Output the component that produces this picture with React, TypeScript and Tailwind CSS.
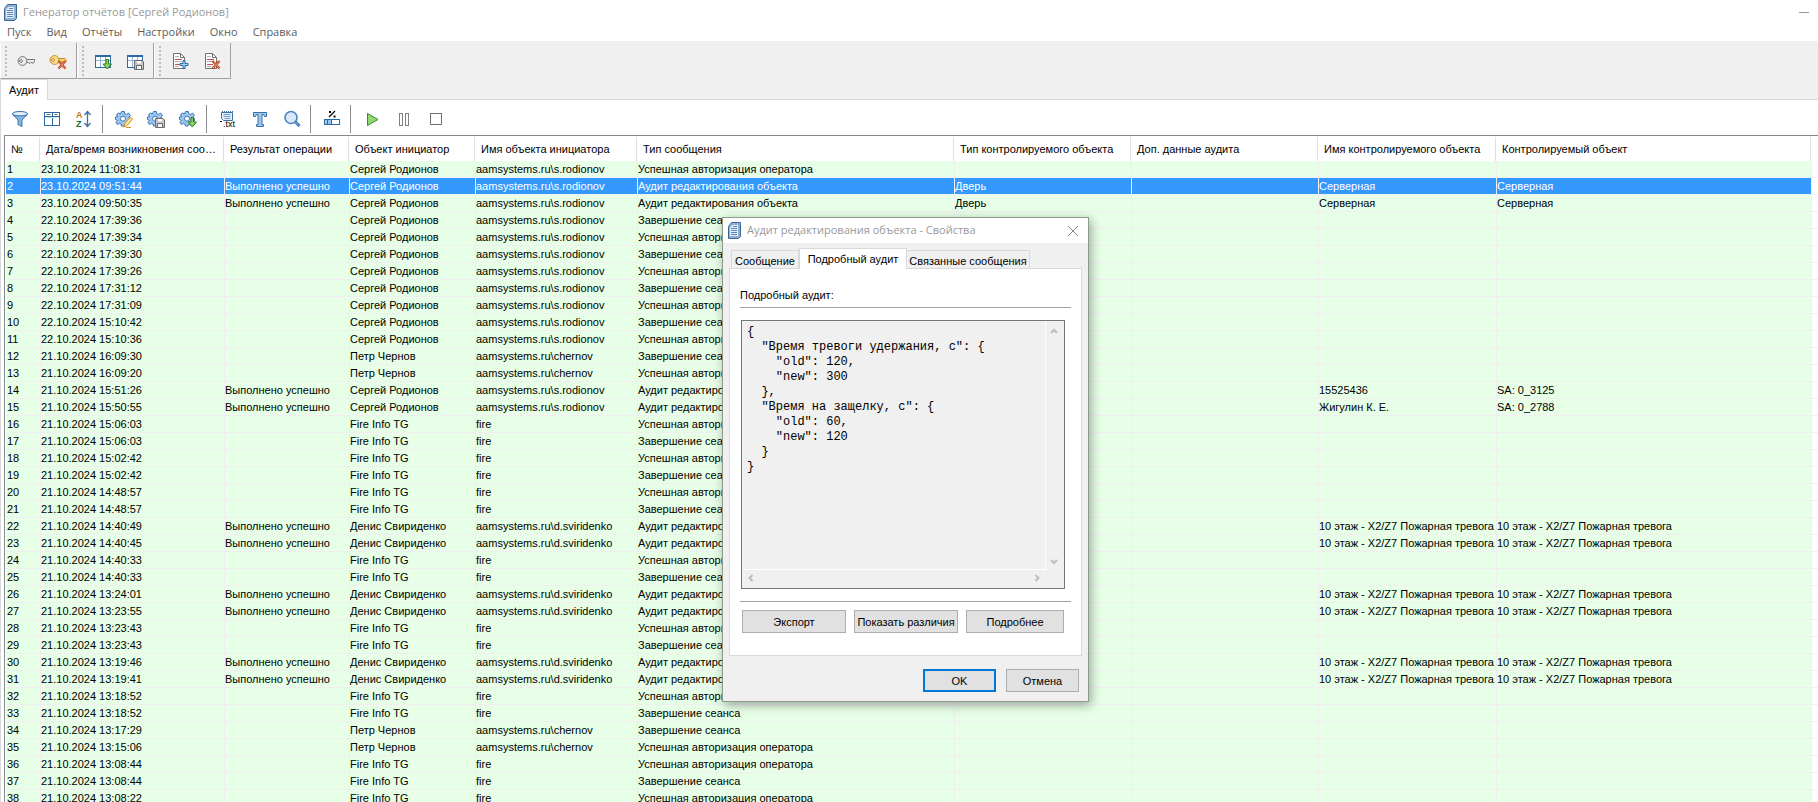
import React, { useState } from 'react';

type Row = {
  time: string;
  result?: string;
  who: string;
  login: string;
  type: string;
  objType?: string;
  objName?: string;
  obj?: string;
};

const LOGIN_OK = 'Успешная авторизация оператора';
const LOGOUT = 'Завершение сеанса';
const EDIT = 'Аудит редактирования объекта';
const DONE = 'Выполнено успешно';
const FIRE_ZONE = '10 этаж - X2/Z7 Пожарная тревога';

const rodionov = { who: 'Сергей Родионов', login: 'aamsystems.ru\\s.rodionov' };
const chernov = { who: 'Петр Чернов', login: 'aamsystems.ru\\chernov' };
const sviridenko = { who: 'Денис Свириденко', login: 'aamsystems.ru\\d.sviridenko' };
const fire = { who: 'Fire Info TG', login: 'fire' };
const door = { result: DONE, type: EDIT, objType: 'Дверь', objName: 'Серверная', obj: 'Серверная' };
const zone = { result: DONE, type: EDIT, objName: FIRE_ZONE, obj: FIRE_ZONE };

const ROWS: Row[] = [
  { time: '23.10.2024 11:08:31', ...rodionov, type: LOGIN_OK },
  { time: '23.10.2024 09:51:44', ...rodionov, ...door },
  { time: '23.10.2024 09:50:35', ...rodionov, ...door },
  { time: '22.10.2024 17:39:36', ...rodionov, type: LOGOUT },
  { time: '22.10.2024 17:39:34', ...rodionov, type: LOGIN_OK },
  { time: '22.10.2024 17:39:30', ...rodionov, type: LOGOUT },
  { time: '22.10.2024 17:39:26', ...rodionov, type: LOGIN_OK },
  { time: '22.10.2024 17:31:12', ...rodionov, type: LOGOUT },
  { time: '22.10.2024 17:31:09', ...rodionov, type: LOGIN_OK },
  { time: '22.10.2024 15:10:42', ...rodionov, type: LOGOUT },
  { time: '22.10.2024 15:10:36', ...rodionov, type: LOGIN_OK },
  { time: '21.10.2024 16:09:30', ...chernov, type: LOGOUT },
  { time: '21.10.2024 16:09:20', ...chernov, type: LOGIN_OK },
  { time: '21.10.2024 15:51:26', ...rodionov, result: DONE, type: EDIT, objName: '15525436', obj: 'SA: 0_3125' },
  { time: '21.10.2024 15:50:55', ...rodionov, result: DONE, type: EDIT, objName: 'Жигулин К. Е.', obj: 'SA: 0_2788' },
  { time: '21.10.2024 15:06:03', ...fire, type: LOGIN_OK },
  { time: '21.10.2024 15:06:03', ...fire, type: LOGOUT },
  { time: '21.10.2024 15:02:42', ...fire, type: LOGIN_OK },
  { time: '21.10.2024 15:02:42', ...fire, type: LOGOUT },
  { time: '21.10.2024 14:48:57', ...fire, type: LOGIN_OK },
  { time: '21.10.2024 14:48:57', ...fire, type: LOGOUT },
  { time: '21.10.2024 14:40:49', ...sviridenko, ...zone },
  { time: '21.10.2024 14:40:45', ...sviridenko, ...zone },
  { time: '21.10.2024 14:40:33', ...fire, type: LOGIN_OK },
  { time: '21.10.2024 14:40:33', ...fire, type: LOGOUT },
  { time: '21.10.2024 13:24:01', ...sviridenko, ...zone },
  { time: '21.10.2024 13:23:55', ...sviridenko, ...zone },
  { time: '21.10.2024 13:23:43', ...fire, type: LOGIN_OK },
  { time: '21.10.2024 13:23:43', ...fire, type: LOGOUT },
  { time: '21.10.2024 13:19:46', ...sviridenko, ...zone },
  { time: '21.10.2024 13:19:41', ...sviridenko, ...zone },
  { time: '21.10.2024 13:18:52', ...fire, type: LOGIN_OK },
  { time: '21.10.2024 13:18:52', ...fire, type: LOGOUT },
  { time: '21.10.2024 13:17:29', ...chernov, type: LOGOUT },
  { time: '21.10.2024 13:15:06', ...chernov, type: LOGIN_OK },
  { time: '21.10.2024 13:08:44', ...fire, type: LOGIN_OK },
  { time: '21.10.2024 13:08:44', ...fire, type: LOGOUT },
  { time: '21.10.2024 13:08:22', ...fire, type: LOGIN_OK },
];

const COLUMNS = [
  { title: '№', width: 'w-[35px]' },
  { title: 'Дата/время возникновения сообщения', width: 'w-[184px]' },
  { title: 'Результат операции', width: 'w-[125px]' },
  { title: 'Объект инициатор', width: 'w-[126px]' },
  { title: 'Имя объекта инициатора', width: 'w-[162px]' },
  { title: 'Тип сообщения', width: 'w-[317px]' },
  { title: 'Тип контролируемого объекта', width: 'w-[177px]' },
  { title: 'Доп. данные аудита', width: 'w-[187px]' },
  { title: 'Имя контролируемого объекта', width: 'w-[178px]' },
  { title: 'Контролируемый объект', width: 'w-[315px]' },
];

const MENU = ['Пуск', 'Вид', 'Отчёты', 'Настройки', 'Окно', 'Справка'];

const AUDIT_JSON = `{
  "Время тревоги удержания, с": {
    "old": 120,
    "new": 300
  },
  "Время на защелку, с": {
    "old": 60,
    "new": 120
  }
}`;

/* ---------- icons ---------- */

function Icon({ children }: { children: React.ReactNode }) {
  return (
    <svg viewBox="0 0 20 20" width="20" height="20" fill="none" aria-hidden="true">
      {children}
    </svg>
  );
}

function AppIcon() {
  return (
    <svg viewBox="0 0 13 17" width="13" height="17" fill="none" aria-hidden="true">
      <path d="M.5 4.5 L3.5 .5 H12.5 V14.5 L10.5 16.5 H.5 Z" fill="#8fb0d0" stroke="#3b6594" strokeLinejoin="round" />
      <path d="M2 6 L4.5 3 H10 V14 H2 Z" fill="#e6eff9" />
      <path d="M5 4.5 H9 M3 6.5 H9 M3 8.5 H9 M3 10.5 H9 M3 12.5 H9" stroke="#5c86b3" />
    </svg>
  );
}

const GreenArrow = () => (
  <path d="M13 8.5 H15.5 V13 H18.5 L14.25 18 L10 13 H13 Z" fill="#8ad463" stroke="#2e7d1e" strokeLinejoin="round" />
);

const Disk = () => (
  <>
    <path d="M9.5 9.5 H17 L18.5 11 V18.5 H9.5 Z" fill="#c4c4c4" stroke="#6a6a6a" />
    <path d="M12 10 H16 V12.5 H12 Z" fill="#fff" />
    <path d="M11.5 14.5 H16.5 V18.5 H11.5 Z" fill="#f4f4f4" stroke="#6a6a6a" />
  </>
);

const RedCross = () => (
  <>
    <path d="M10.5 10 L17.5 17.5 M17.5 10 L10.5 17.5" stroke="#b8431c" strokeWidth="2.4" />
    <path d="M11 10.5 L17 17 M17 10.5 L11 17" stroke="#f0946a" strokeWidth="1" />
  </>
);

const Grid = () => (
  <>
    <rect x="2.5" y="4.5" width="15" height="12" fill="#fff" stroke="#2b6aa6" />
    <path d="M3 5.5 H17" stroke="#2b6aa6" />
    <path d="M3 9.5 H17 M7.5 6 V16 M12.5 6 V16" stroke="#8db6dd" />
  </>
);

const Sheet = () => (
  <>
    <path d="M3.5 2.5 H10.5 L14.5 6.5 V17.5 H3.5 Z" fill="#fff" stroke="#707070" />
    <path d="M10.5 2.5 V6.5 H14.5" stroke="#707070" />
    <path d="M5 5.5 H9 M5 10.5 H12 M5 15.5 H9" stroke="#b0b0b0" />
    <path d="M5 8.5 H12 M5 13.5 H11" stroke="#cf4a58" />
  </>
);

const Gear = () => (
  <>
    <path
      d="M7.5 2.5 H10.5 V4.5 L12.5 5.5 L14.5 4 L16.5 6.5 L15 8 V9 L16.5 9.5 V12 L14.5 12.5 L14.5 14.5 L12.5 16 L11 15 L10 17 H7.5 L7 15 L5.5 14.5 L3.5 15.5 L2 13.5 L3.5 11.5 L1.5 10.5 V8 L3.5 7.5 L2.5 5.5 L4.5 4 L6.5 5 Z"
      fill="#9cc6ef"
      stroke="#3f78b0"
      strokeLinejoin="round"
    />
    <circle cx="9" cy="9.7" r="2.5" fill="#fff" stroke="#3f78b0" />
  </>
);

const KeyIcon = () => (
  <Icon>
    <path d="M11 8.5 H18.5 V10.5 L17.5 12 H16 L15.5 11 L14 12.5 L12.5 11.5 H10.5" fill="#ececec" stroke="#757575" />
    <circle cx="6.5" cy="10" r="4.4" fill="#ececec" stroke="#757575" />
    <circle cx="5" cy="10" r="1.4" fill="#fff" stroke="#757575" />
  </Icon>
);

const KeyDeleteIcon = () => (
  <Icon>
    <path d="M10 7.5 H17 L18.5 9.5 L17.5 11 H11" fill="#f7d774" stroke="#c08a20" />
    <circle cx="6.5" cy="9" r="4.4" fill="#fbe08c" stroke="#c08a20" />
    <circle cx="5" cy="9" r="1.4" fill="#fff" stroke="#c08a20" />
    <RedCross />
  </Icon>
);

const GridLoadIcon = () => <Icon><Grid /><GreenArrow /></Icon>;
const GridSaveIcon = () => <Icon><Grid /><Disk /></Icon>;

const ReportAddIcon = () => (
  <Icon>
    <Sheet />
    <path d="M13 9.5 H15 V12.5 H18 V14.5 H15 V17.5 H13 V14.5 H10 V12.5 H13 Z" fill="#a9d2f7" stroke="#2b6aa6" />
  </Icon>
);

const ReportDeleteIcon = () => <Icon><Sheet /><RedCross /></Icon>;

const FilterIcon = () => (
  <Icon>
    <path d="M2.5 4.5 C2.5 7.5 8 9 8 11.5 V15.5 L12 17.5 V11.5 C12 9 17.5 7.5 17.5 4.5" fill="#86b6e6" stroke="#3870a8" />
    <ellipse cx="10" cy="4.7" rx="7.5" ry="2.2" fill="#e4f0fb" stroke="#3870a8" />
  </Icon>
);

const ColumnsIcon = () => (
  <Icon>
    <rect x="2.5" y="3.5" width="15" height="13" fill="#fff" stroke="#2b6aa6" />
    <path d="M3 7.5 H17 M10.5 4 V16" stroke="#2b6aa6" />
    <path d="M4.5 5.5 H8.5 M12.5 5.5 H15.5" stroke="#777" />
    <path d="M3 8.5 H17" stroke="#cfe2f5" />
  </Icon>
);

const SortIcon = () => (
  <Icon>
    <text x="2" y="9" fontFamily="Liberation Sans" fontSize="9" fontWeight="700" fill="#c17a13">A</text>
    <text x="2" y="18" fontFamily="Liberation Sans" fontSize="9" fontWeight="700" fill="#12703a">Z</text>
    <path d="M13.5 3 V17 M10.5 6 L13.5 2.5 L16.5 6 M10.5 14 L13.5 17.5 L16.5 14" stroke="#3870a8" strokeWidth="1.3" />
  </Icon>
);

const GearEditIcon = () => (
  <Icon>
    <Gear />
    <path d="M9.5 18 L11 14 L16.5 8 L18.5 10 L13 16.5 Z" fill="#fbe3a6" stroke="#d18d1c" />
    <path d="M12 18.5 H17" stroke="#d18d1c" />
  </Icon>
);

const GearSaveIcon = () => <Icon><Gear /><Disk /></Icon>;
const GearLoadIcon = () => <Icon><Gear /><GreenArrow /></Icon>;

const TxtIcon = () => (
  <Icon>
    <path d="M3.5 3.5 H14.5 V11.5 H5.5 L3.5 9.5 Z" fill="#e8f1fb" stroke="#3870a8" />
    <path d="M4 2.5 H15" stroke="#3870a8" strokeDasharray="1 1" />
    <path d="M5.5 5.5 H12.5 M5.5 7.5 H12.5 M6.5 9.5 H12.5" stroke="#6c9fd0" />
    <path d="M2 12.5 H4" stroke="#000" />
    <text x="5" y="18" fontFamily="Liberation Sans" fontSize="9" fill="#000">.txt</text>
  </Icon>
);

const TextIcon = () => (
  <Icon>
    <path d="M3.5 3.5 H16.5 V7.5 H14.5 L13.5 5.5 H12 V15.5 H13.5 V17.5 H6.5 V15.5 H8 V5.5 H6.5 L5.5 7.5 H3.5 Z" fill="#9cc6f0" stroke="#3870a8" />
  </Icon>
);

const SearchIcon = () => (
  <Icon>
    <path d="M13 12.5 L17.5 17" stroke="#3870a8" strokeWidth="3" />
    <circle cx="9" cy="8.5" r="6" fill="#d9e9f8" stroke="#4a84bd" strokeWidth="1.6" />
    <path d="M13.5 13 L17 16.5" stroke="#86b6e6" />
  </Icon>
);

const ProgressIcon = () => (
  <Icon>
    <path d="M7 8 L13 2" stroke="#000" strokeWidth="1.2" />
    <path d="M7 3 H9 M11.5 7.5 H13.5" stroke="#000" strokeWidth="2" />
    <rect x="2.5" y="10.5" width="15" height="5" fill="#fff" stroke="#2b6aa6" />
    <path d="M3 11 H9 V15 H3 Z" fill="#9cc6f0" />
    <path d="M5.5 11 V15 M9.5 11 V15" stroke="#2b6aa6" />
  </Icon>
);

const PlayIcon = () => (
  <Icon>
    <path d="M5.5 4.5 L16 10.5 L5.5 16.5 Z" fill="#90d873" stroke="#3a8a2c" />
  </Icon>
);

const PauseIcon = () => (
  <Icon>
    <rect x="5.5" y="4.5" width="3" height="12" fill="#fff" stroke="#808080" />
    <rect x="11.5" y="4.5" width="3" height="12" fill="#fff" stroke="#808080" />
  </Icon>
);

const StopIcon = () => (
  <Icon>
    <rect x="4.5" y="4.5" width="11" height="11" fill="#fff" stroke="#707070" />
  </Icon>
);

function ToolButton({ label, children }: { label: string; children: React.ReactNode }) {
  return (
    <button type="button" aria-label={label} className="w-8 h-7 flex items-center justify-center">
      {children}
    </button>
  );
}

/* Docked toolbar with a dotted grip on its left side */
function Band({ children }: { children: React.ReactNode }) {
  return (
    <div className="w-[77px] h-9 flex items-center border-r border-b border-[#a0a0a0] border-l border-l-white">
      <span className="w-[9px] flex flex-col items-center gap-[2px]">
        {[0, 1, 2, 3, 4, 5, 6, 7].map((i) => (
          <span key={i} className="w-[2px] h-[2px] bg-[#bdbdbd]" />
        ))}
      </span>
      {children}
    </div>
  );
}

const Separator = () => <span className="w-px h-7 bg-[#8c8c8c] ml-[2px] mr-[5px]" />;

function AuditTable() {
  const [selected, setSelected] = useState(1);

  return (
    <table className="w-full table-fixed border-separate border-spacing-0 text-[11px] leading-4">
      <colgroup>
        {COLUMNS.map((c) => <col key={c.title} className={c.width} />)}
        <col />
      </colgroup>
      <thead>
        <tr>
          {COLUMNS.map((c) => (
            <th key={c.title} scope="col" className="p-0 pr-px font-normal text-left">
              <div className="h-6 leading-6 px-[5px] truncate border-r border-[#e0e0e0]">{c.title}</div>
            </th>
          ))}
          <td />
        </tr>
      </thead>
      <tbody>
        {ROWS.map((r, i) => {
          const cells = [i + 1, r.time, r.result, r.who, r.login, r.type, r.objType, '', r.objName, r.obj];
          const color = i === selected ? 'bg-[#3399ff] text-white' : 'bg-[#e6ffe6]';
          return (
            <tr key={i} onClick={() => setSelected(i)} className="h-[17px]">
              {cells.map((cell, n) => (
                <td
                  key={n}
                  className={`p-0 first:pl-px border-r border-b border-[#f0eef0] whitespace-nowrap overflow-hidden ${color}`}
                >
                  {cell}
                </td>
              ))}
              <td className="p-0 border-b border-[#f0eef0]" />
            </tr>
          );
        })}
      </tbody>
    </table>
  );
}

function Arrow({ d, label }: { d: string; label: string }) {
  return (
    <button type="button" aria-label={label} className="w-4 h-4 flex items-center justify-center">
      <svg viewBox="0 0 10 10" width="10" height="10" fill="none" stroke="#bdbdbd" strokeWidth="2">
        <path d={d} />
      </svg>
    </button>
  );
}

const BTN = 'h-[23px] border border-[#adadad] bg-[#e1e1e1] text-center whitespace-nowrap leading-[23px]';

function PropertiesDialog() {
  return (
    <div
      role="dialog"
      aria-labelledby="dlg-title"
      className="absolute left-[722px] top-[217px] w-[367px] bg-[#f0f0f0] border border-[#8f9a8f] shadow-[2px_3px_10px_rgba(0,0,0,0.35)] text-[11px]"
    >
      <div className="h-[25px] bg-white flex items-center pl-[5px] pr-[9px]">
        <AppIcon />
        <h2 id="dlg-title" className="ml-[6px] flex-1 font-['Open_Sans',sans-serif] text-[11px] text-[#999]">
          Аудит редактирования объекта - Свойства
        </h2>
        <button type="button" aria-label="Закрыть">
          <svg viewBox="0 0 12 12" width="12" height="12" stroke="#8a8a8a">
            <path d="M1 1 L11 11 M11 1 L1 11" />
          </svg>
        </button>
      </div>

      <div className="px-[6px] pt-[5px] pb-[9px]">
        <div role="tablist" className="flex items-end pl-[2px] h-[21px]">
          <button type="button" role="tab" className="w-[68px] h-[18px] mb-px border border-b-0 border-[#d9d9d9] leading-5">
            Сообщение
          </button>
          <button
            type="button"
            role="tab"
            aria-selected="true"
            className="w-[108px] h-[21px] z-10 bg-white border border-b-0 border-[#d9d9d9] leading-5"
          >
            Подробный аудит
          </button>
          <button type="button" role="tab" className="w-[123px] h-[18px] mb-px border border-b-0 border-l-0 border-[#d9d9d9] leading-5 whitespace-nowrap">
            Связанные сообщения
          </button>
        </div>

        <div role="tabpanel" className="-mt-px bg-white border border-[#d9d9d9] pt-[18px] pb-[22px] px-[10px]">
          <label htmlFor="audit" className="block leading-4">Подробный аудит:</label>
          <hr className="mt-1 border-t border-[#a0a0a0]" />
          <div className="mt-3 mr-[6px] ml-px border border-[#767676] bg-[#f0f0f0] p-px grid grid-cols-[1fr_17px] grid-rows-[1fr_17px]">
            <textarea
              id="audit"
              readOnly
              wrap="off"
              value={AUDIT_JSON}
              className="h-[248px] w-full resize-none overflow-hidden outline-none pl-1 pt-[3px] border-r border-b border-white font-['Liberation_Mono',monospace] text-[12px] leading-[15px]"
            />
            <div className="flex flex-col justify-between pt-px">
              <Arrow d="M2 7 L5 4 L8 7" label="Вверх" />
              <Arrow d="M2 3 L5 6 L8 3" label="Вниз" />
            </div>
            <div className="flex justify-between pr-px">
              <Arrow d="M6.5 2 L3.5 5 L6.5 8" label="Влево" />
              <Arrow d="M3.5 2 L6.5 5 L3.5 8" label="Вправо" />
            </div>
          </div>
          <hr className="mt-3 border-t border-[#a0a0a0]" />
          <div className="mt-2 flex gap-2 pl-[2px]">
            <button type="button" className={`w-[104px] ${BTN}`}>Экспорт</button>
            <button type="button" className={`w-[104px] ${BTN}`}>Показать различия</button>
            <button type="button" className={`w-[98px] ${BTN}`}>Подробнее</button>
          </div>
        </div>

        <div className="mt-[13px] flex justify-end gap-[10px] pr-[3px]">
          <button type="button" className="w-[73px] h-[23px] border-2 border-[#0078d7] bg-[#e1e1e1] leading-[21px]">OK</button>
          <button type="button" className={`w-[73px] ${BTN}`}>Отмена</button>
        </div>
      </div>
    </div>
  );
}

export default function App() {
  return (
    <div className="relative h-screen overflow-hidden flex flex-col bg-white text-black font-['Liberation_Sans',Arial,sans-serif]">
      {/* Title bar and main menu */}
      <header className="shrink-0 font-['Open_Sans',sans-serif] text-[11px]">
        <div className="h-6 flex items-center pl-1 pr-[9px] text-[#999]">
          <AppIcon />
          <h1 className="ml-[6px] flex-1">Генератор отчётов [Сергей Родионов]</h1>
          <button type="button" aria-label="Свернуть" className="w-[10px] h-px bg-[#999]" />
        </div>
        <nav className="h-[17px] flex items-center gap-[15px] pl-[7px] text-[#5c5c5c]">
          {MENU.map((m) => <button key={m} type="button">{m}</button>)}
        </nav>
      </header>

      {/* Main toolbar and document tabs */}
      <div className="shrink-0 bg-[#f0f0f0] pt-[2px]">
        <div className="flex">
          <Band>
            <ToolButton label="Войти"><KeyIcon /></ToolButton>
            <ToolButton label="Выйти"><KeyDeleteIcon /></ToolButton>
          </Band>
          <Band>
            <ToolButton label="Загрузить вид"><GridLoadIcon /></ToolButton>
            <ToolButton label="Сохранить вид"><GridSaveIcon /></ToolButton>
          </Band>
          <Band>
            <ToolButton label="Добавить отчёт"><ReportAddIcon /></ToolButton>
            <ToolButton label="Удалить отчёт"><ReportDeleteIcon /></ToolButton>
          </Band>
        </div>
        <div role="tablist" className="flex">
          <button type="button" role="tab" aria-selected="true" className="w-12 h-[21px] bg-white border-l border-r border-t border-[#d9d9d9] text-[11px] leading-4">
            Аудит
          </button>
          <span className="flex-1 border-b border-[#d9d9d9]" />
        </div>
      </div>

      <main className="flex-1 min-h-0 flex flex-col pl-[3px] border-l border-[#d9d9d9]">
        <div className="h-[35px] shrink-0 flex items-center pt-[3px]">
          <ToolButton label="Фильтр"><FilterIcon /></ToolButton>
          <ToolButton label="Столбцы"><ColumnsIcon /></ToolButton>
          <ToolButton label="Сортировка"><SortIcon /></ToolButton>
          <Separator />
          <ToolButton label="Изменить настройки"><GearEditIcon /></ToolButton>
          <ToolButton label="Сохранить настройки"><GearSaveIcon /></ToolButton>
          <ToolButton label="Загрузить настройки"><GearLoadIcon /></ToolButton>
          <Separator />
          <ToolButton label="Экспорт в текст"><TxtIcon /></ToolButton>
          <ToolButton label="Шрифт"><TextIcon /></ToolButton>
          <ToolButton label="Поиск"><SearchIcon /></ToolButton>
          <Separator />
          <ToolButton label="Прогресс"><ProgressIcon /></ToolButton>
          <Separator />
          <ToolButton label="Запустить"><PlayIcon /></ToolButton>
          <ToolButton label="Пауза"><PauseIcon /></ToolButton>
          <ToolButton label="Стоп"><StopIcon /></ToolButton>
        </div>
        <div className="flex-1 min-h-0 overflow-hidden border-t border-l border-[#828790] pt-px pl-px">
          <AuditTable />
        </div>
      </main>

      <PropertiesDialog />
    </div>
  );
}
